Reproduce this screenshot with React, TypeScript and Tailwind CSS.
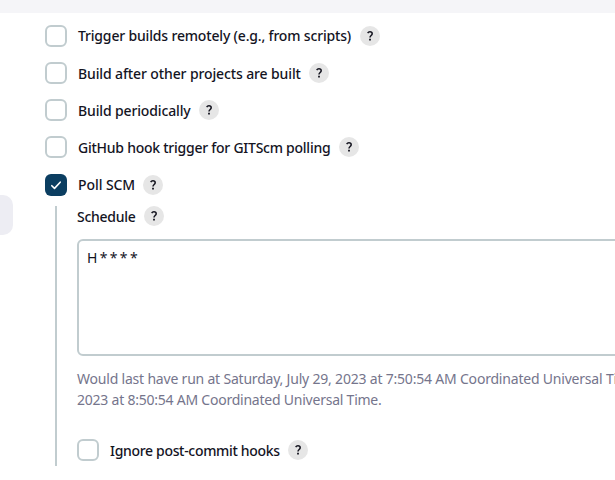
type Trigger = { label: string; text: string; gap: string };

const triggers: Trigger[] = [
  { label: 'Trigger builds remotely (e.g., from scripts)', text: 'w-[282px] tracking-[-0.17px]', gap: 'mb-[15px]' },
  { label: 'Build after other projects are built', text: 'w-[231px] pt-0.5 tracking-[-0.12px]', gap: 'mb-[15px]' },
  { label: 'Build periodically', text: 'w-[121px] pt-0.5 tracking-[-0.14px]', gap: 'mb-[15px]' },
  { label: 'GitHub hook trigger for GITScm polling', text: 'w-[261px] pt-0.5 tracking-[-0.25px]', gap: 'mb-[16px]' },
];

function Help() {
  return (
    <span className="flex h-5 w-5 shrink-0 items-center justify-center rounded-full bg-[#e6e6e6]">
      <svg viewBox="0 0 20 20" className="h-5 w-5" fill="none" stroke="#14141f" strokeWidth="1.5">
        <path d="M7.7 7.1C8.2 6.1 8.9 5.7 9.9 5.7c1.4 0 2.3.8 2.3 2 0 1.7-2.2 2-2.2 3.9" />
        <path d="M9.1 13.7h1.8" strokeWidth="1.8" />
      </svg>
    </span>
  );
}

function Checkbox({ checked = false }: { checked?: boolean }) {
  if (checked) {
    return (
      <span className="h-[22px] w-[22px] shrink-0 rounded-[6px] bg-[#0b3e61]">
        <svg viewBox="0 0 22 22" className="h-[22px] w-[22px]" fill="none" stroke="white" strokeWidth="1.6" strokeLinecap="round" strokeLinejoin="round">
          <path d="M6.8 11.7l2.7 2.7 5.7-6.2" />
        </svg>
      </span>
    );
  }
  return <span className="h-[22px] w-[22px] shrink-0 rounded-[6px] border-2 border-[#c1cccf] bg-white" />;
}

function Option({ label, text, checked }: { label: string; text: string; checked?: boolean }) {
  return (
    <div className="flex h-[22px] items-center">
      <Checkbox checked={checked} />
      <span className={`ml-[11px] shrink-0 whitespace-nowrap text-sm font-[550] leading-[22px] ${text}`}>{label}</span>
      <Help />
    </div>
  );
}

export default function App() {
  return (
    <div className="h-[480px] w-[615px] overflow-hidden bg-white font-['Noto_Sans',sans-serif] text-[#14141f]">
      <div className="h-[13px] bg-[#f5f5f8]" />
      <div className="flex">
        <div className="mt-[182px] h-10 w-[13px] shrink-0 rounded-r-[10px] bg-[#ededf3]" />
        <main className="ml-8 w-[570px] pt-3">
          {triggers.map((t) => (
            <div key={t.label} className={t.gap}>
              <Option label={t.label} text={t.text} />
            </div>
          ))}
          <Option label="Poll SCM" text="w-[65px] tracking-[-0.08px]" checked />
          <section className="ml-[10px] mt-[10px] h-[260px] border-l-2 border-[#c1cccf] pl-5">
            <div className="flex h-5 items-center">
              <span className="w-[67px] whitespace-nowrap pt-0.5 text-sm font-[550] tracking-[-0.28px]">Schedule</span>
              <Help />
            </div>
            <div className="mt-[13px] h-[117px] w-[560px] rounded-[6px] border-2 border-[#c1cccf] px-2 pt-[7px] text-sm leading-5 tracking-[-0.1px] [word-spacing:-1.1px]">
              H * * * *
            </div>
            <p className="mt-[12px] whitespace-nowrap text-sm leading-[21px] text-[#75758c]">
              <span className="block tracking-[-0.2px]">Would last have run at Saturday, July 29, 2023 at 7:50:54 AM Coordinated Universal Time;</span>
              <span className="block tracking-[-0.23px]">2023 at 8:50:54 AM Coordinated Universal Time.</span>
            </p>
            <div className="mt-[29px]">
              <Option label="Ignore post-commit hooks" text="w-[178px] pt-0.5 tracking-[-0.32px]" />
            </div>
          </section>
        </main>
      </div>
    </div>
  );
}
